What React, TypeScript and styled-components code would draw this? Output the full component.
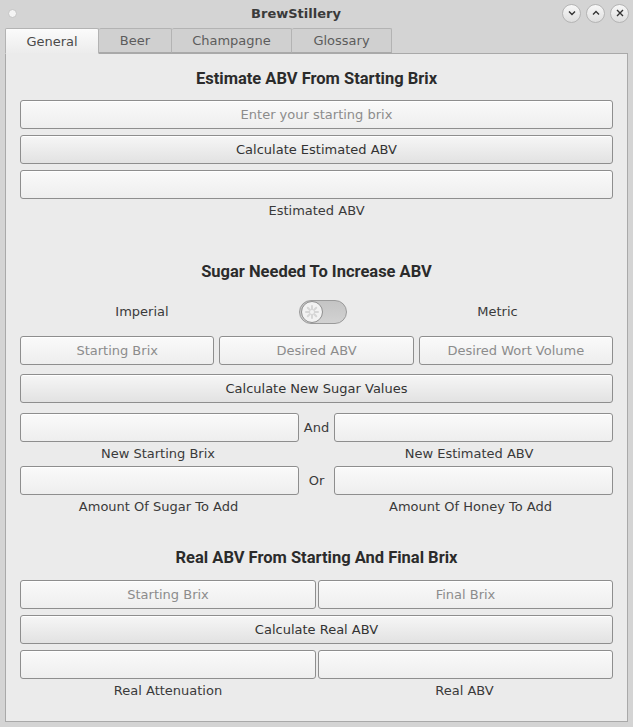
import React from "react";
import styled, { createGlobalStyle } from "styled-components";

const Global = createGlobalStyle`
  html, body { margin: 0; padding: 0; background: #d4d4d4; }
  body { font-family: "DejaVu Sans", sans-serif; font-size: 13px; color: #3c3c3c; }
  * { box-sizing: border-box; }
`;

const Window = styled.div`
  width: 633px;
  height: 727px;
  background: #d4d4d4;
  display: flex;
  flex-direction: column;
`;

const TitleBar = styled.div`
  height: 26px;
  display: grid;
  grid-template-columns: 80px 1fr 80px;
  align-items: center;
  padding: 0 4px 0 8px;
`;

const Dot = styled.span`
  width: 9px;
  height: 9px;
  border-radius: 50%;
  background: #f4f4f4;
  border: 1px solid #c4c4c4;
`;

const Title = styled.div`
  text-align: center;
  font-weight: bold;
  font-size: 13px;
  color: #3a3a3a;
  padding-right: 45px;
`;

const WinButtons = styled.div`
  display: flex;
  justify-content: flex-end;
  gap: 5px;
`;

const WinButton = styled.span`
  width: 19px;
  height: 19px;
  border-radius: 50%;
  border: 1px solid #b4b4b4;
  background: linear-gradient(#f8f8f8, #dedede);
  display: flex;
  align-items: center;
  justify-content: center;
`;

const Body = styled.div`
  flex: 1;
  display: flex;
  flex-direction: column;
  padding: 1px 5px 5px 5px;
`;

const Tabs = styled.div`
  display: flex;
  height: 26px;
  align-items: flex-end;
  position: relative;
  z-index: 1;
`;

const Tab = styled.div<{ $active?: boolean; $w: number }>`
  width: ${(p) => p.$w}px;
  height: ${(p) => (p.$active ? 26 : 25)}px;
  display: flex;
  align-items: center;
  justify-content: center;
  font-size: 13px;
  color: ${(p) => (p.$active ? "#4a4a4a" : "#5c5c5c")};
  background: ${(p) => (p.$active ? "linear-gradient(#fbfbfb, #ececec)" : "#d0d0d0")};
  border: 1px solid #b3b3b3;
  border-left-width: ${(p) => (p.$active ? 1 : 0)}px;
  border-bottom: ${(p) => (p.$active ? "1px solid #ebebeb" : "1px solid #a9a9a9")};
  border-radius: 2px 2px 0 0;
  margin-bottom: ${(p) => (p.$active ? -1 : 0)}px;
`;

const Panel = styled.div`
  flex: 1;
  background: #ebebeb;
  border: 1px solid #a9a9a9;
  padding: 14px 14px 0 14px;
  display: flex;
  flex-direction: column;
`;

const Heading = styled.h2<{ $mt?: number }>`
  margin: ${(p) => p.$mt ?? 0}px 0 0 0;
  font-family: Roboto, sans-serif;
  font-weight: 700;
  font-size: 16.5px;
  line-height: 22px;
  text-align: center;
  color: #2b2b2b;
`;

const Field = styled.div<{ $mt?: number }>`
  height: 29px;
  margin-top: ${(p) => p.$mt ?? 6}px;
  border: 1px solid #8e8e8e;
  border-radius: 3px;
  background: linear-gradient(#fafafa, #eeeeee);
  box-shadow: inset 0 1px 0 #ffffff;
  display: flex;
  align-items: center;
  justify-content: center;
  color: #8c8c8c;
  font-size: 13px;
  min-width: 0;
`;

const Button = styled(Field)`
  background: linear-gradient(#f6f6f6, #e2e2e2);
  color: #333;
`;

const Label = styled.div<{ $mt?: number }>`
  margin-top: ${(p) => p.$mt ?? 3}px;
  line-height: 18px;
  text-align: center;
  color: #3a3a3a;
  font-size: 13px;
`;

const UnitRow = styled.div`
  margin-top: 16px;
  height: 25px;
  display: grid;
  grid-template-columns: 244px 1fr 231px;
  align-items: center;
  justify-items: center;
`;

const Toggle = styled.div`
  width: 48px;
  height: 24px;
  border-radius: 12px;
  border: 1px solid #9a9a9a;
  background: linear-gradient(#c4c4c4, #d2d2d2);
  padding: 1px;
  display: flex;
  align-items: center;
`;

const Knob = styled.div`
  width: 22px;
  height: 22px;
  border-radius: 50%;
  border: 1px solid #8f8f8f;
  background: #f2f2f2;
  display: flex;
  align-items: center;
  justify-content: center;
`;

const Row3 = styled.div<{ $mt?: number }>`
  display: grid;
  grid-template-columns: 1fr 1fr 1fr;
  gap: 5px;
  margin-top: ${(p) => p.$mt ?? 12}px;
  & > * { margin-top: 0; }
`;

const SplitRow = styled.div<{ $mt?: number }>`
  display: grid;
  grid-template-columns: 1fr 35px 1fr;
  align-items: center;
  margin-top: ${(p) => p.$mt ?? 10}px;
  & > * { margin-top: 0; }
`;

const Conj = styled.div`
  text-align: center;
  color: #3a3a3a;
`;

const LabelRow = styled.div<{ $cols: string; $pr?: number }>`
  display: grid;
  grid-template-columns: ${(p) => p.$cols};
  padding-right: ${(p) => p.$pr ?? 0}px;
  & > * { margin-top: 3px; }
`;

const Pair = styled.div<{ $mt?: number }>`
  display: grid;
  grid-template-columns: 296px 1fr;
  gap: 2px;
  margin-top: ${(p) => p.$mt ?? 6}px;
  & > * { margin-top: 0; }
`;

const Chevron = ({ up }: { up?: boolean }) => (
  <svg width="8" height="6" viewBox="0 0 8 6">
    <path d={up ? "M1 4.5 L4 1.5 L7 4.5" : "M1 1.5 L4 4.5 L7 1.5"} fill="none" stroke="#333" strokeWidth="1.4" />
  </svg>
);

const Cross = () => (
  <svg width="8" height="8" viewBox="0 0 8 8">
    <path d="M1 1 L7 7 M7 1 L1 7" stroke="#333" strokeWidth="1.4" />
  </svg>
);

const KnobMark = () => (
  <svg width="16" height="16" viewBox="0 0 16 16">
    {[0, 45, 90, 135, 180, 225, 270, 315].map((a) => (
      <line
        key={a}
        x1="8"
        y1="8"
        x2={8 + 6 * Math.cos((a * Math.PI) / 180)}
        y2={8 + 6 * Math.sin((a * Math.PI) / 180)}
        stroke="#d6d6d6"
        strokeWidth="2"
        strokeLinecap="round"
      />
    ))}
    <circle cx="8" cy="8" r="2" fill="#f2f2f2" />
  </svg>
);

export default function App() {
  return (
    <>
      <Global />
      <Window>
        <TitleBar>
          <Dot />
          <Title>BrewStillery</Title>
          <WinButtons>
            <WinButton><Chevron /></WinButton>
            <WinButton><Chevron up /></WinButton>
            <WinButton><Cross /></WinButton>
          </WinButtons>
        </TitleBar>
        <Body>
          <Tabs>
            <Tab $active $w={94}>General</Tab>
            <Tab $w={73}>Beer</Tab>
            <Tab $w={120}>Champagne</Tab>
            <Tab $w={100}>Glossary</Tab>
          </Tabs>
          <Panel>
            <Heading>Estimate ABV From Starting Brix</Heading>
            <Field $mt={10}>Enter your starting brix</Field>
            <Button>Calculate Estimated ABV</Button>
            <Field />
            <Label>Estimated ABV</Label>

            <Heading $mt={41}>Sugar Needed To Increase ABV</Heading>
            <UnitRow>
              <Label $mt={0}>Imperial</Label>
              <Toggle>
                <Knob><KnobMark /></Knob>
              </Toggle>
              <Label $mt={0}>Metric</Label>
            </UnitRow>
            <Row3 $mt={12}>
              <Field>Starting Brix</Field>
              <Field>Desired ABV</Field>
              <Field>Desired Wort Volume</Field>
            </Row3>
            <Button $mt={9}>Calculate New Sugar Values</Button>
            <SplitRow $mt={10}>
              <Field />
              <Conj>And</Conj>
              <Field />
            </SplitRow>
            <LabelRow $cols="1fr 35px 1fr" $pr={6}>
              <Label>New Starting Brix</Label>
              <span />
              <Label>New Estimated ABV</Label>
            </LabelRow>
            <SplitRow $mt={3}>
              <Field />
              <Conj>Or</Conj>
              <Field />
            </SplitRow>
            <LabelRow $cols="1fr 35px 1fr" $pr={4}>
              <Label>Amount Of Sugar To Add</Label>
              <span />
              <Label>Amount Of Honey To Add</Label>
            </LabelRow>

            <Heading $mt={31}>Real ABV From Starting And Final Brix</Heading>
            <Pair $mt={11}>
              <Field>Starting Brix</Field>
              <Field>Final Brix</Field>
            </Pair>
            <Button>Calculate Real ABV</Button>
            <Pair>
              <Field />
              <Field />
            </Pair>
            <LabelRow $cols="296px 1fr">
              <Label>Real Attenuation</Label>
              <Label>Real ABV</Label>
            </LabelRow>
          </Panel>
        </Body>
      </Window>
    </>
  );
}
